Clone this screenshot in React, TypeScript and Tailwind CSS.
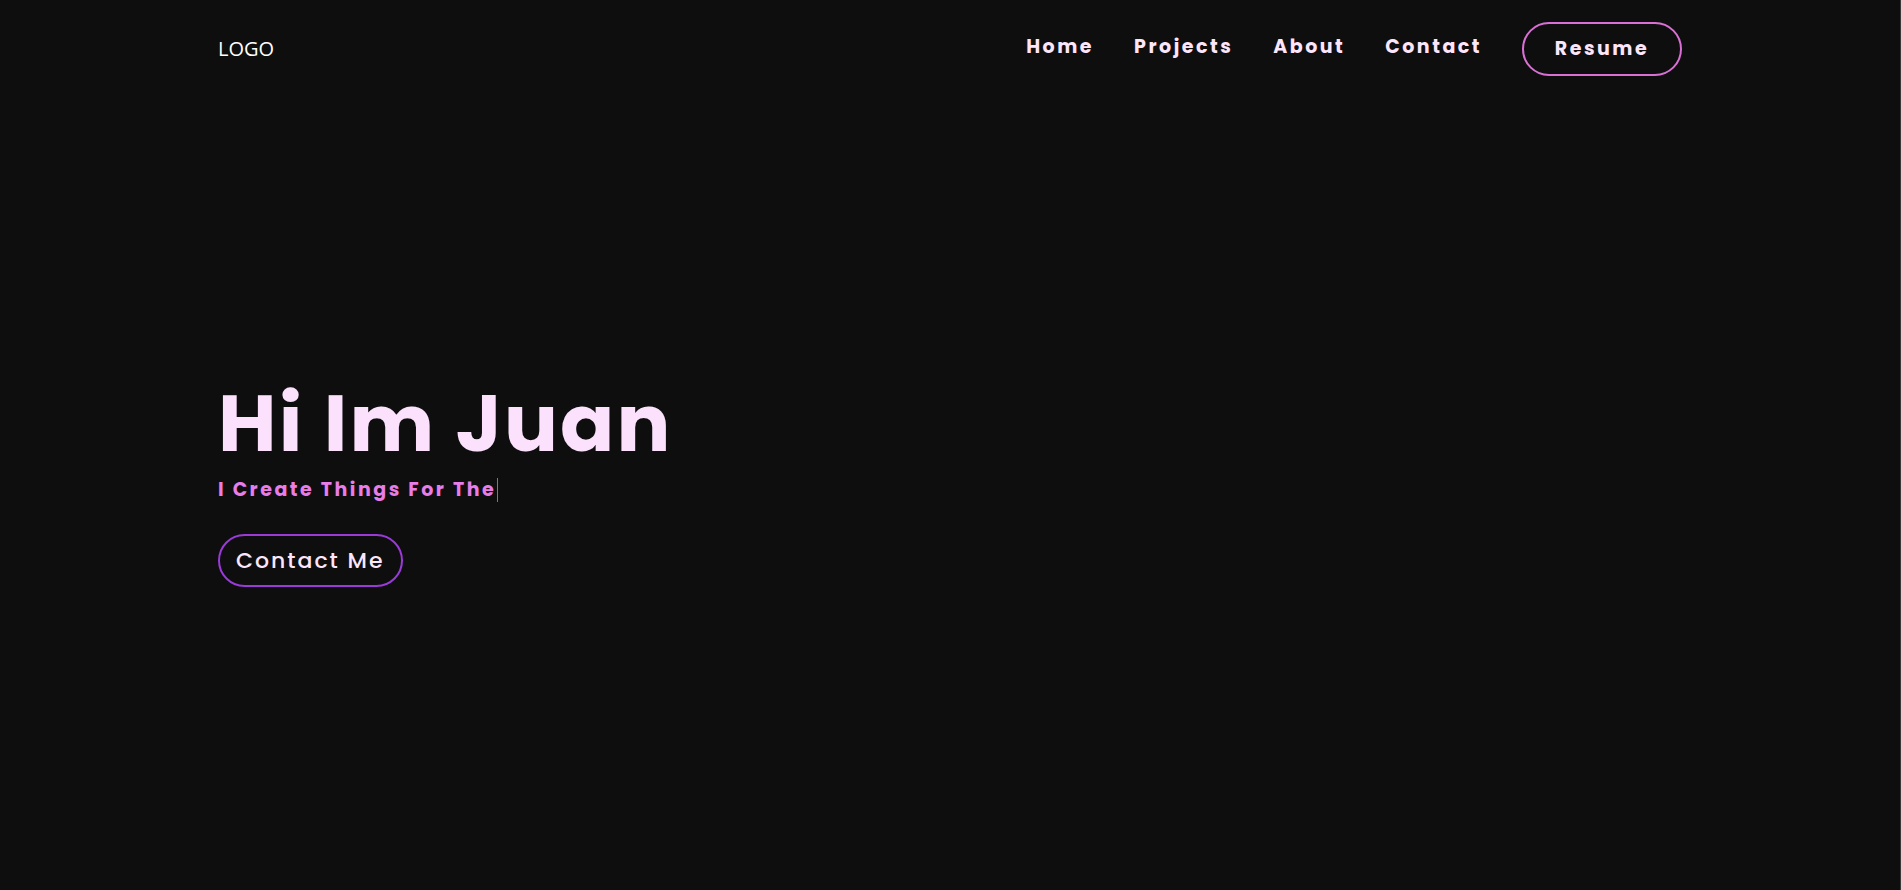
const navLinks = ["Home", "Projects", "About", "Contact"];

export default function App() {
  return (
    <div
      className="min-h-screen w-full bg-[#0e0e0e] border-r border-[#3a3a3a]"
      style={{ fontFamily: "Poppins, Inter, 'Noto Sans', sans-serif" }}
    >
      {/* navbar */}
      <nav className="flex h-[98px] items-center justify-between px-[218px]">
        <span className="text-[20px] text-white" style={{ fontFamily: "'Open Sans', sans-serif" }}>
          LOGO
        </span>
        <div className="flex items-center">
          <ul className="flex items-center gap-[40px] pb-[3px]">
            {navLinks.map((link) => (
              <li key={link}>
                <a href="#" className="text-[19px] font-bold tracking-[2.5px] text-[#fde6fb]">
                  {link}
                </a>
              </li>
            ))}
          </ul>
          <a
            href="#"
            className="ml-[40px] flex h-[54px] w-[160px] items-center justify-center rounded-full border-2 border-[#da70d6] text-[19px] font-bold tracking-[2.5px] text-[#fde6fb]"
          >
            Resume
          </a>
        </div>
      </nav>

      {/* hero */}
      <section className="px-[218px] pt-[277px]">
        <h1 className="text-[80px] font-bold leading-[96px] tracking-[2.2px] text-[#fbe1fb]">Hi Im Juan</h1>
        <p className="mt-[5px] flex h-[28px] items-center text-[19px] font-bold tracking-[2.5px] text-[#e87de9]">
          I Create Things For The
          <span className="ml-[1px] inline-block h-[24px] w-px bg-[#7a7a7a]" />
        </p>
        <button className="mt-[30px] h-[53px] rounded-full border-2 border-[#9a3ad8] px-[16px] text-[22px] font-medium tracking-[2px] text-[#fde6fb]">
          Contact Me
        </button>
      </section>
    </div>
  );
}
